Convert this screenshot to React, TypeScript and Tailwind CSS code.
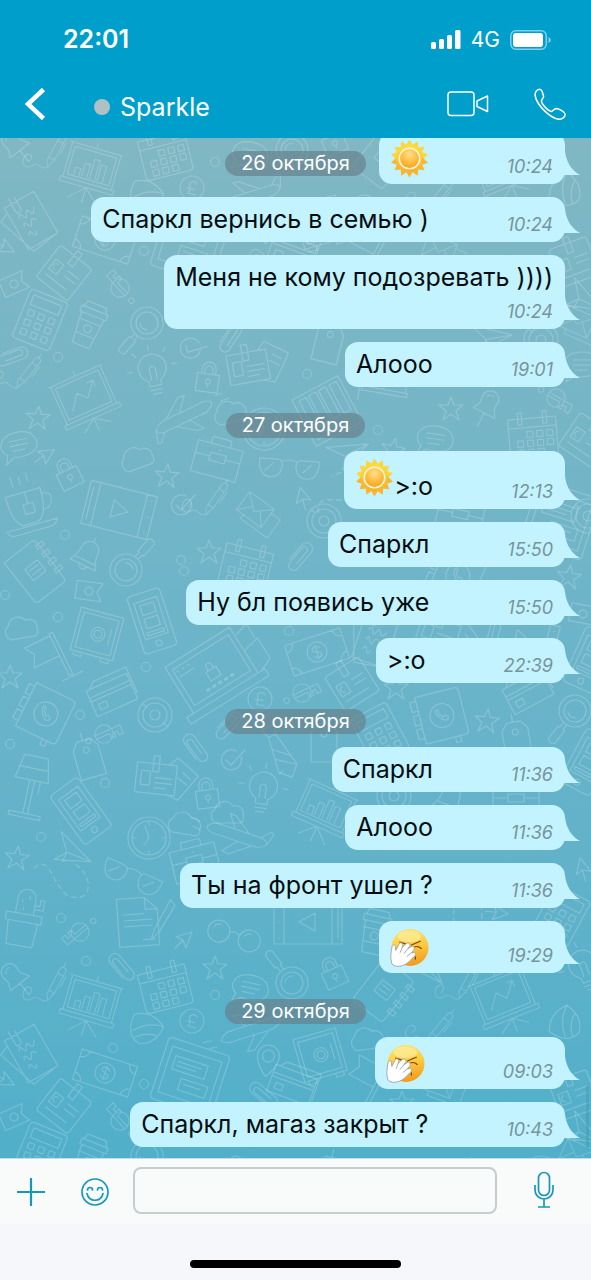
import type { ReactNode } from 'react';

/* ---------- Wallpaper doodles ---------- */

const doodles: Record<string, ReactNode> = {
  dot: <circle r="5" />,
  star: <path d="M0-12 3-4 12-4 5 2 8 11 0 5-8 11-5 2-12-4-3-4Z" />,
  arrow: <path d="M8-8-8-3-1 0 2 8ZM-1 0-9 8" />,
  pin: <path d="M-9-4A8 8 0 0 1 7-10L7 0 12 8H-12L-9 1ZM0 8V22M-5-8A5 5 0 0 1 1-11" />,
  pen: <path d="M2 12 0 22-5 15-5-20A4 4 0 0 1 3-20V12ZM-5 10H3M-5-14H3M6-16V0M-2-24V-30M0 22C-8 30-14 20-18 28S-30 36-32 26-20 14-24 26" />,
  chart: (
    <>
      <path d="M-30-20H30M-28-20V20M28-20V20M-31 20H31V25H-31ZM-24-16H24V16H-24ZM0-20V-26M0 25V42M0 25-16 40M0 25 16 40" />
      <path d="M-17 14V6H-11V14M-8 14V-1H-2V14M1 14V-8H7V14M10 14V-4H16V14" />
    </>
  ),
  trend: (
    <path d="M-32-24H32M-30-24V22M30-24V22M-33 22H33V27H-33ZM-26-20H26V18H-26ZM-18 10-6-6 3 4 16-12M9-12H16V-5M0-24V-30M0 27V42M0 27-16 38M0 27 16 38" />
  ),
  calendar: (
    <>
      <path d="M-24-18H24V18Q24 22 20 22H-20Q-24 22-24 18ZM-24-9H24M-14-24V-12H-10V-24ZM11-24V-12H15V-24Z" />
      <path d="M-6-5H0V1H-6ZM4-5H10V1H4ZM14-5H20V1H14ZM-16 4H-10V10H-16ZM-6 4H0V10H-6ZM4 4H10V10H4ZM14 4H20V10H14ZM-16 13H-10V19H-16ZM-6 13H0V19H-6ZM4 13H10V19H4Z" />
    </>
  ),
  coin: <path d="M12 0A12 12 0 1 1-12 0 12 12 0 0 1 12 0ZM4-5A4 4 0 0 0-3-4C-3 0 0 1-3 6H5M-5 1H3" />,
  check: <path d="M10-3A10 10 0 1 1 5-9M-5 0 0 5 14-10" />,
  shell: <path d="M-16-10Q0-20 16-8 14 12-2 16-18 12-16-10ZM-12 6Q0-8 16-8M-8 12Q2 2 13 3" />,
  plane: (
    <path d="M-34 6Q-30-3-16-3L26-7Q36-7 34-1 30 5 18 6L-16 9Q-30 12-34 6ZM-4-4-16-18H-9L12-6M4 7-8 24H0L20 6M26-7 34-17H38L35-2M-26-2-20-2M-48 12H-40M-54 4H-44" />
  ),
  papers: (
    <path d="M-18-24H16V24H-18ZM-18-18-28-14-14 28 14 24M-10-30V-16A3 3 0 0 0-4-16V-28M-10-8Q-8-14-6-8T-2-8 2-8 8-10M-10 2Q-8-4-6 2T-2 2 4 2M-10 12Q-8 6-6 12T-2 12" />
  ),
  money: (
    <path d="M-29-16H29V16H-29ZM-29-8A8 8 0 0 0-21-16M29-8A8 8 0 0 1 21-16M-29 8A8 8 0 0 1-21 16M29 8A8 8 0 0 0 21 16M10 0A10 10 0 1 1-10 0 10 10 0 0 1 10 0ZM4-3C2-7-4-6-4-3-4 1 4-1 4 3 4 6-2 7-4 3M0-7V7" />
  ),
  badge: (
    <path d="M-17-20H17Q20-20 20-17V17Q20 20 17 20H-17Q-20 20-20 17V-17Q-20-20-17-20ZM-3-26H3V-10H-3ZM-15-6H-5V6H-15ZM-10-3A3 3 0 1 0-10 3M2-4H15M2 2H15M-14 12H12" />
  ),
  cards: (
    <path d="M-22-14H18V16H-22ZM-6-22H0V-6H-6ZM-17-6H-8V8H-17ZM-3 0H14M-3 5H14M-3 10H8M10-14 18-22 40-6 22 20 10 16M24-8 32-2M20-2 29 4" />
  ),
  flag: <path d="M-13-9H13L8 0 13 9H-13ZM4 0A4 4 0 1 1-4 0 4 4 0 0 1 4 0Z" />,
  pole: <path d="M14-22H18V24H14ZM14-20H-14L-8-10-14 2H14M6 26H28" />,
  key: <path d="M-10-1A10 10 0 1 1-10 1ZM-22 0A3 3 0 1 0-16 0 3 3 0 0 0-22 0ZM-10-2H20V8H15V3H11V8H6V2H-10" />,
  tablet: (
    <path d="M-28-32H28Q32-32 32-28V28Q32 32 28 32H-28Q-32 32-32 28V-28Q-32-32-28-32ZM-26-24H26V24H-26ZM-20-16H14V-2H-20ZM-16-11H8M-16-7H4M-8 4H20V16H-8ZM-4 9H14" />
  ),
  video: (
    <path d="M-34-22H34V22H-34ZM-24-22V22M24-22V22M-7-9 9 0-7 9ZM29-16H30M29 0H30M29 16H30M-30-16V16" />
  ),
  place: <path d="M0 18Q-11 6-11-3A11 11 0 0 1 11-3Q11 6 0 18ZM6-3A6 6 0 1 1-6-3 6 6 0 0 1 6-3Z" />,
  calc: (
    <>
      <path d="M-16-26H16Q20-26 20-22V22Q20 26 16 26H-16Q-20 26-20 22V-22Q-20-26-16-26ZM-15-21H15V-11H-15Z" />
      <path d="M-14-6H-8V0H-14ZM-3-6H3V0H-3ZM8-6H14V0H8ZM-14 4H-8V10H-14ZM-3 4H3V10H-3ZM8 4H14V10H8ZM-14 14H-8V20H-14ZM-3 14H3V20H-3ZM8 14H14V20H8Z" />
    </>
  ),
  coffee: <path d="M-14-16H14V-10H-14ZM-10-22H10L12-16H-12ZM-12-10-9 22H9L12-10M-12-3H12M-10 11H10M4 4A4 4 0 1 1-4 4 4 4 0 0 1 4 4Z" />,
  lens: <path d="M16 0A16 16 0 1 1-16 0 16 16 0 0 1 16 0ZM11 0A11 11 0 1 1-11 0 11 11 0 0 1 11 0ZM-2 16V22H-4V38Q0 42 4 38V22H2V16M-5 5Q0 9 5 5" />,
  clip: <path d="M-5 10V-9A6 6 0 0 1 7-9V12A5 5 0 0 1-3 12V-7A3 3 0 0 1 3-7V9" />,
  bulb: (
    <path d="M-6 14V9Q-14 4-14-4A14 14 0 0 1 14-4Q14 4 6 9V14ZM-6 18H6M-4 22H4M-3 8V-4Q0-8 3-4V8M-20-4H-25M20-4H25M0-22V-27M-14-18-17-22M14-18 17-22" />
  ),
  lock: <path d="M-11-4H11V14H-11ZM-7-4V-9A7 7 0 0 1 7-9V-4M-4-4V-8A4 4 0 0 1 4-8V-4M0 9V6A2.500 2.500 0 1 1 1 6" />,
  cloud: <path d="M-12 8A8 8 0 0 1-13-6 10 10 0 0 1 5-9 8 8 0 0 1 15 1 5 5 0 0 1 12 8Z" />,
  clock: <path d="M21 0A21 21 0 1 1-21 0 21 21 0 0 1 21 0ZM17 0A17 17 0 1 1-17 0 17 17 0 0 1 17 0ZM-4-12 0 0-5 7M0-16V-13M16 0H13M0 16V13M-16 0H-13" />,
  tag: <path d="M-12-12-6-20H8L14-12V18H-12ZM4-10A3 3 0 1 1-2-10 3 3 0 0 1 4-10ZM0-20V-28" />,
  book: (
    <path d="M-26-26H26V26H-26ZM-20-22H-12V10H-20ZM-9-22H-1V10H-9ZM2-22H10V10H2ZM14-22H22V10H14ZM-22 16H22M-22 21H10" />
  ),
  chat: <path d="M-18-2Q-16-14 0-14T18-2 0 11Q-4 11-7 10L-16 16-13 7Q-18 4-18-2ZM-9-6H9M-9-1H9M-7 4H5" />,
  planeP: <path d="M-20-14 20 0-14 14-6 2ZM-6 2 20 0M-6 2-6 12 0 8" />,
  glasses: <path d="M-30-8H-12Q-6-8-7 0-9 10-18 10-30 10-30-8ZM12-8H30Q30 10 18 10 9 10 7 0 6-8 12-8ZM-8-6Q0-10 8-6M-24 4-16-4M14 4 22-4" />,
  rounds: <path d="M-5 0A11 11 0 1 1-27 0 11 11 0 0 1-5 0ZM27 0A11 11 0 1 1 5 0 11 11 0 0 1 27 0ZM-5-2Q0-6 5-2M-22-3A6 6 0 0 1-16-7M10-3A6 6 0 0 1 16-7" />,
  case: <path d="M-23-15H23V17H-23ZM-10-15V-20Q-10-22-8-22H8Q10-22 10-20V-15M-23-2H-8M8-2H23M-8-6H8V2H-8ZM0-10H1" />,
  mail: <path d="M-20-14H18V14H-20ZM-20-14-1 3 18-14M-20 14-6-1M18 14 5-2M18-8H32V20H-10V14" />,
  cup: <path d="M-18-16H18Q18 14 6 16H-8Q-18 12-18-16ZM18-10Q28-10 26-2 24 6 16 6M-26 18H26Q24 24 18 24H-18Q-24 24-26 18ZM2-16V-4M-3-4H7V6H-3ZM-8-34V-24M0-32V-24M8-34V-26" />,
  bell: <path d="M-14 12Q-9 4-9-4A9 9 0 0 1 9-4Q9 4 14 12ZM-4 12A4 4 0 0 0 4 12M0-13V-17M-11 7H11" />,
  notebook: (
    <path d="M-20-26H14Q18-26 18-22V22Q18 26 14 26H-16Q-20 26-20 22ZM-8-8H8V6H-8ZM-5-4H5M-5 1H5M15-20H23V-16H15ZM15-10H23V-6H15ZM15 0H23V4H15ZM15 10H23V14H15Z" />
  ),
  safe: (
    <path d="M-22-22H22V22H-22ZM-18-18H18V18H-18ZM8 0A7 7 0 1 1-6 0 7 7 0 0 1 8 0ZM5 0A4 4 0 1 1-3 0 4 4 0 0 1 5 0ZM13-8V8M-18 22V26H-10V22M10 22V26H18V22" />
  ),
  phone: <path d="M-13-30H13Q17-30 17-26V26Q17 30 13 30H-13Q-17 30-17 26V-26Q-17-30-13-30ZM-12-22H12V16H-12ZM-7-18H7V-8H-7ZM-7-4H7V6H-7ZM3 23A3 3 0 1 1-3 23 3 3 0 0 1 3 23ZM-9 10H9V13H-9Z" />,
  laptop: (
    <>
      <path d="M-38-28H38V26H-38ZM-33-22H33V20H-33ZM-46 26H46V34H-46ZM-30-18H-28M-24-18H-22M-18-18H-16M-30-12H-14M-6-2H6V8H-6ZM-3-2V-6A3 3 0 0 1 3-6V-2M38 0 56-4V20L42 26M40-18 54-22V-6" />
      <path d="M-14 14H-12M-7 14H-5M0 14H2M7 14H9M14 14H16" strokeWidth="3" />
    </>
  ),
  credit: <path d="M-22-14H22V14H-22ZM-22-6H22M-22-2H22M-16 3H-8V9H-16ZM-18-14-12-20H24V8" />,
  contacts: (
    <path d="M-20-24H20Q24-24 24-20V20Q24 24 20 24H-20ZM-26-20H-20V-10H-26ZM-26-6H-20V4H-26ZM-26 8H-20V18H-26ZM14 0A12 12 0 1 1-10 0 12 12 0 0 1 14 0ZM-3-6C-5-2 2 7 7 5L8 2 5 0 3 2-1-3 0-5-2-7ZM10 24V30H15V24" />
  ),
  disc: <path d="M17 0A17 17 0 1 1-17 0 17 17 0 0 1 17 0ZM12 0A12 12 0 1 1-12 0 12 12 0 0 1 12 0ZM5 0A5 5 0 1 1-5 0 5 5 0 0 1 5 0ZM-13-11-8-8M13 11 8 8" />,
  lamp: <path d="M-12-32H12L17-8H-17ZM-15-20H15M-2-8V26M3-8V26M-16 26H16V30H-16ZM9-8V4" />,
  tie: <path d="M-7-28H7L4-18H-4ZM-4-18-10 18 0 28 10 18 4-18M-6-6 8 8M-8 4 9 18" />,
  trail: <path d="M-28-20Q-18-30-10-14T6 8Q28 14 26-6 24-18 10-26" strokeDasharray="5 4" />,
  cactus: <path d="M-18-2H18V6H-18ZM-15 6-13 30H13L15 6M-9-2V-18A9 9 0 0 1 9-18V-2M9-8H18V-18H14V-12H9M-4-16V-14M3-20V-18M-2-8V-6" />,
  doc: <path d="M-20-24H8L20-12V24H-20ZM8-24V-12H20M-14-8H6M-14-2H14M-14 4H14M4 18H16M34-20 16 8 12 18 20 12 38-14Z" />,
  globe: <path d="M14-6A14 14 0 1 1-14-6 14 14 0 0 1 14-6ZM-18-2Q-12 14 6 14M0 14V20M-16 20H14" />,
};

type Placement = [kind: string, x: number, y: number, turn: number];

const tile: Placement[] = [
  ['pin', 15, 144, -38], ['pen', 56, 152, 28], ['chart', 92, 166, 16], ['calendar', 165, 154, -14],
  ['dot', 215, 162, 0], ['chat', 250, 156, 12], ['lens', 292, 150, 142], ['lock', 333, 140, -24],
  ['notebook', 384, 158, 38], ['pen', 468, 150, 28], ['trend', 503, 163, -22], ['shell', 566, 190, -60],
  ['shell', 146, 196, 20], ['coin', 192, 188, 12], ['plane', 250, 196, -12], ['papers', 32, 220, -30],
  ['dot', 113, 215, 0], ['money', 105, 240, 18], ['tablet', 190, 244, 18], ['place', 268, 226, 8],
  ['safe', 320, 222, -16], ['cloud', 368, 208, -8], ['pole', 362, 246, 28], ['dot', 144, 251, 0],
  ['arrow', 4, 247, 70], ['badge', 64, 273, 38], ['flag', 14, 284, -24], ['key', 120, 288, 228],
  ['calc', 40, 320, 22], ['coffee', 89, 325, 22], ['lens', 147, 323, 42], ['clip', 13, 355, 70],
  ['dot', 58, 357, 0], ['pen', 28, 374, 38], ['check', 190, 348, 30], ['clip', 230, 336, 34],
  ['trend', 84, 396, -24], ['bulb', 153, 372, -12], ['lock', 208, 378, 8], ['cards', 250, 366, -10],
  ['star', 38, 418, 4], ['plane', 185, 418, 160], ['cloud', 231, 414, -16], ['clock', 264, 429, 0],
  ['tag', 327, 344, 14], ['dot', 307, 374, 0], ['book', 327, 411, -28], ['dot', 378, 430, 0],
  ['star', 451, 409, 0], ['pin', 488, 406, 28], ['key', 556, 398, 30], ['chat', 435, 440, 8],
  ['calendar', 533, 436, -5], ['planeP', 350, 452, -24], ['star', 393, 450, 12], ['mail', 578, 322, 24],
  ['planeP', 492, 337, -6], ['pen', 418, 372, 60], ['disc', 541, 340, 0], ['chat', 582, 366, 0],
  ['pole', 388, 376, 100], ['badge', 586, 440, 34], ['chat', 19, 446, -12], ['arrow', 45, 456, 10],
  ['lock', 68, 474, -26], ['cloud', 138, 460, -20], ['star', 167, 476, 4], ['case', 217, 460, 15],
  ['glasses', 289, 468, 4], ['cup', 27, 508, -16], ['video', 119, 510, 14], ['check', 181, 505, 0],
  ['pen', 216, 500, 34], ['mail', 256, 510, 36], ['arrow', 303, 498, -60], ['disc', 324, 521, 0],
  ['trail', 350, 498, -60], ['dot', 65, 535, 0], ['bell', 88, 554, 26], ['lens', 126, 570, 222],
  ['notebook', 36, 571, -38], ['flag', 89, 591, 8], ['star', 209, 552, 0], ['calendar', 246, 566, 14],
  ['dot', 181, 560, 0], ['dot', 184, 571, 0], ['clip', 300, 555, 40], ['case', 460, 516, 12],
  ['tablet', 560, 520, 18], ['star', 569, 577, 8], ['contacts', 456, 575, 24], ['disc', 588, 516, 0],
  ['dot', 5, 595, 0], ['dot', 58, 617, 0], ['cloud', 22, 630, -10], ['safe', 97, 634, 15],
  ['phone', 152, 621, -18], ['flag', 583, 614, 10], ['pole', 46, 660, -26], ['star', 10, 677, 0],
  ['laptop', 212, 671, -32], ['dot', 146, 667, 0], ['dot', 289, 631, 0], ['money', 317, 652, -18],
  ['papers', 376, 640, 18], ['cards', 440, 634, 18], ['video', 522, 640, 14], ['phone', 590, 660, 24],
  ['credit', 112, 695, -24], ['contacts', 44, 713, 26], ['dot', 80, 715, 0], ['disc', 155, 715, 0],
  ['coin', 260, 699, 8], ['key', 302, 693, -26], ['badge', 352, 684, -32], ['star', 396, 688, 0],
  ['calc', 380, 734, -28], ['contacts', 440, 716, -14], ['star', 487, 721, 6], ['credit', 528, 692, -28],
  ['tag', 516, 742, -10], ['lens', 575, 711, 38], ['phone', 588, 762, 28], ['tag', 323, 744, 0],
  ['lamp', 30, 788, 12], ['key', 104, 734, -24], ['tag', 88, 760, -16],
  ['clip', 194, 748, -36], ['check', 231, 760, 0], ['tie', 280, 752, -26], ['clip', 228, 724, 44],
  ['dot', 10, 744, 0], ['dot', 105, 783, 0], ['phone', 81, 811, -36], ['cards', 158, 778, 6],
  ['lock', 207, 794, -8], ['bulb', 263, 790, 8], ['chart', 326, 806, 24], ['disc', 394, 796, 0],
  ['bell', 450, 798, 20], ['case', 516, 800, 0], ['dot', 41, 837, 0], ['clock', 149, 838, 0],
  ['cloud', 185, 826, 10], ['plane', 237, 834, 24], ['case', 195, 862, -14], ['cloud', 228, 815, 0],
  ['star', 17, 858, 6], ['planeP', 73, 853, 26], ['trail', 62, 888, 0], ['glasses', 132, 877, 24],
  ['cactus', 24, 916, 10], ['dot', 61, 918, 0], ['key', 80, 932, 140], ['doc', 138, 922, -4],
  ['arrow', 184, 940, 0], ['rounds', 234, 936, 18], ['video', 308, 922, 180], ['coffee', 375, 932, 12],
  ['trail', 455, 914, 40], ['arrow', 497, 913, 50], ['calc', 561, 916, 28], ['arrow', 583, 869, -60],
  ['clip', 120, 967, -40], ['dot', 86, 961, 0], ['star', 215, 968, 0], ['bulb', 584, 968, -20],
  ['planeP', 429, 968, 50], ['star', 402, 270, 0], ['mail', 440, 250, 20], ['badge', 574, 262, -20],
  ['planeP', 585, 300, 30], ['clip', 262, 262, -50], ['credit', 292, 252, 20], ['pen', 440, 196, 40],
];

function scaleOf(kind: string) {
  if (kind === 'pen') return 0.8;
  if (kind === 'mail') return 0.8;
  if (kind === 'dot' || kind === 'chart' || kind === 'trend' || kind === 'key' || kind === 'plane') return 0.9;
  return 1;
}

function Wallpaper() {
  return (
    <svg className="absolute inset-0 h-full w-full" aria-hidden="true">
      <g id="doodle-tile" fill="none" stroke="#ffffff" strokeOpacity="0.2" strokeWidth="1.2" strokeLinejoin="round" strokeLinecap="round">
        {tile.map(([kind, x, y, turn], i) => (
          <g key={i} transform={`translate(${x} ${y - 138}) rotate(${turn}) scale(${scaleOf(kind)})`}>
            {doodles[kind]}
          </g>
        ))}
      </g>
      <use href="#doodle-tile" y="833" />
    </svg>
  );
}

/* ---------- Emoji ---------- */

const rays = Array.from({ length: 14 }, (_, i) => (i * 360) / 14);

function Sun() {
  return (
    <svg viewBox="-20 -20 40 40" className="h-[39px] w-[39px]" role="img" aria-label="солнце">
      <defs>
        <radialGradient id="sun-core" cx="0.5" cy="0.3" r="0.75">
          <stop offset="0" stopColor="#ffe08a" />
          <stop offset="0.55" stopColor="#fdbb3c" />
          <stop offset="1" stopColor="#f29a1c" />
        </radialGradient>
        <linearGradient id="sun-rays" x1="0" y1="0" x2="0" y2="1">
          <stop offset="0" stopColor="#ffdf3e" />
          <stop offset="1" stopColor="#f6b02c" />
        </linearGradient>
      </defs>
      {rays.map((turn) => (
        <path key={turn} d="M-4.500-12 0-19.500 4.500-12Z" fill={turn > 90 && turn < 270 ? '#f7b733' : '#fcd63a'} transform={`rotate(${turn})`} />
      ))}
      <circle r="13.500" fill="url(#sun-rays)" />
      <circle r="10.500" fill="url(#sun-core)" stroke="#fff6dc" strokeWidth="1.600" />
    </svg>
  );
}

function Facepalm() {
  return (
    <svg viewBox="0 0 40 40" className="h-[39px] w-[39px]" role="img" aria-label="рука на лице">
      <defs>
        <linearGradient id="face" x1="0.4" y1="0" x2="0.6" y2="1">
          <stop offset="0" stopColor="#ffe36a" />
          <stop offset="0.5" stopColor="#fdc93c" />
          <stop offset="1" stopColor="#f2981f" />
        </linearGradient>
      </defs>
      <circle cx="20.500" cy="20" r="19" fill="url(#face)" />
      <ellipse cx="20" cy="8.500" rx="12" ry="6" fill="#fff2a8" opacity="0.6" />
      <path d="M10 14.500 18 17M31 13.500 22 17.500M25 19.500Q29 18 32 21M26 29.500V32" fill="none" stroke="#7a4310" strokeWidth="1.200" strokeLinecap="round" />
      <path
        d="M2 37C0 31 1 25 2 20 2 17 5 16 5.500 19L6 23 9 17C10 14 13.500 15 13 18L12.500 20 16.500 16C19 14 21.500 16.500 20 19L18.500 21 22 19C24.500 18 26 20.500 24 23L22 25.500 24.500 25C27 25.500 26.500 28 24.500 29.500 21 33 18 37 13 38.500 9 40 4 39.500 2 37Z"
        fill="#ffffff" stroke="#9ba0aa" strokeWidth="0.900" strokeLinejoin="round"
      />
      <path d="M12.500 20 10.500 25M18.500 21 14.500 26M22 25.500 17.500 29" fill="none" stroke="#9ba0aa" strokeWidth="0.900" strokeLinecap="round" />
    </svg>
  );
}

/* ---------- Conversation ---------- */

function DatePill({ children }: { children: ReactNode }) {
  return (
    <span className="block h-[25px] rounded-full bg-[#66818d]/70 px-4 text-[20px] leading-[25px] text-white">
      {children}
    </span>
  );
}

function DateRow({ children }: { children: ReactNode }) {
  return (
    <li className="mt-[13px] flex justify-center self-stretch">
      <DatePill>{children}</DatePill>
    </li>
  );
}

type BubbleProps = { time: string; text?: string; emoji?: 'sun' | 'palm'; stacked?: boolean };

function Bubble({ time, text, emoji, stacked }: BubbleProps) {
  return (
    <li
      className={`relative mr-[26px] flex max-w-[85%] shrink-0 rounded-[13px] bg-[#c3f3ff] pr-3 pl-[11px] ${
        stacked ? 'flex-col gap-[2px]' : 'items-end gap-[78px]'
      } ${emoji ? (text ? 'h-[58px]' : 'h-[52px]') : ''}`}
    >
      <div className={`flex ${emoji && text ? 'items-end' : 'items-center'}`}>
        {emoji && (
          <span className={text ? 'pb-[12px]' : 'pb-[6px]'}>{emoji === 'sun' ? <Sun /> : <Facepalm />}</span>
        )}
        {text && <p className="text-[25px] leading-[45px] text-[#050d10]">{text}</p>}
      </div>
      <time className="self-end pb-[7px] text-[18px] leading-5 text-[#78949d] italic">{time}</time>
      <svg viewBox="0 0 17 24" className="absolute bottom-[9px] left-full -ml-[2px] h-6 w-[17px]" aria-hidden="true">
        <path d="M0 0H2C3 11 9 20 17 24H0Z" fill="#c3f3ff" />
      </svg>
    </li>
  );
}

function Header() {
  return (
    <header className="shrink-0 bg-[#009fcb] pb-[10px] text-white">
      <div className="flex h-20 items-center justify-between pr-[39px] pl-[63px]">
        <span className="text-[25px] font-semibold">22:01</span>
        <div className="flex items-center gap-[10px]">
          <svg viewBox="0 0 30 20" className="h-5 w-[30px]" fill="#ffffff" aria-hidden="true">
            <rect x="0" y="12" width="5" height="7" rx="1.500" />
            <rect x="8" y="9" width="5" height="10" rx="1.500" />
            <rect x="16" y="5" width="5" height="14" rx="1.500" />
            <rect x="24" y="0" width="5.500" height="19" rx="1.500" />
          </svg>
          <span className="text-[21px]">4G</span>
          <svg viewBox="0 0 42 20" className="h-5 w-[42px]" aria-hidden="true">
            <rect x="0.800" y="0.800" width="35.500" height="18.400" rx="5" fill="none" stroke="#7fd0e8" strokeWidth="1.500" />
            <rect x="3" y="3" width="30" height="14" rx="3" fill="#ffffff" />
            <path d="M38.500 7Q41 8 41 10T38.500 13Z" fill="#7fd0e8" />
          </svg>
        </div>
      </div>
      <div className="flex h-12 items-center pr-[25px] pl-6">
        <button aria-label="Назад" className="block">
          <svg viewBox="0 0 22 34" className="h-[34px] w-[22px]" fill="none" stroke="#ffffff" strokeWidth="4.500" aria-hidden="true">
            <path d="M19.500 2.500 4 17 19.500 31.500" />
          </svg>
        </button>
        <span className="mt-[6px] ml-[48px] h-4 w-4 rounded-full bg-[#b0c1c5]" />
        <h1 className="ml-[10px] flex-1 pt-[6px] text-[25px] leading-8">Sparkle</h1>
        <button aria-label="Видеозвонок" className="mr-[45px] block">
          <svg viewBox="0 0 42 26" className="h-[26px] w-[42px]" fill="none" stroke="#ffffff" strokeWidth="1.500" strokeLinejoin="round" aria-hidden="true">
            <rect x="1" y="1" width="26" height="23.500" rx="3" />
            <path d="M30 10 40.500 5V20.500L30 15.500Z" />
          </svg>
        </button>
        <button aria-label="Позвонить" className="block">
          <svg viewBox="0 0 32 32" className="h-8 w-8" fill="none" stroke="#ffffff" strokeWidth="1.500" strokeLinejoin="round" aria-hidden="true">
            <path d="M2 3.500C4 0.500 7 0.500 8.200 3.500L9.500 8C10 9.800 8 11 7.500 12.500 7 15 13 22.500 17 23.500 19 24 19.500 20.500 22.500 20.500 25.500 21 31.500 24.500 31.200 26.500 31 29 28 31.300 25.500 31.300 17 31 3 17.500 1.200 8 0.900 6 1.200 4.700 2 3.500Z" />
          </svg>
        </button>
      </div>
    </header>
  );
}

function Composer() {
  return (
    <footer className="shrink-0 bg-[#f6f7fa]">
      <form className="flex h-[66px] items-center border-t border-[#c4dde4] bg-[#f9fafa] pr-[35px] pb-[3px] pl-4 text-[#1798b8]">
        <button type="button" aria-label="Добавить" className="mt-1 block">
          <svg viewBox="0 0 30 30" className="h-[30px] w-[30px]" fill="none" stroke="currentColor" strokeWidth="2.200" aria-hidden="true">
            <path d="M15 1V29M1 15H29" />
          </svg>
        </button>
        <button type="button" aria-label="Смайлы" className="mt-1 ml-[35px] block">
          <svg viewBox="0 0 28 28" className="h-7 w-7" fill="none" stroke="currentColor" strokeWidth="1.700" strokeLinecap="round" aria-hidden="true">
            <circle cx="14" cy="14" r="13" />
            <path d="M6.500 12A2.500 2.500 0 0 1 11.500 12M16.500 12A2.500 2.500 0 0 1 21.500 12M6 15.500C8 24.500 20 24.500 22 15.500" />
          </svg>
        </button>
        <input
          aria-label="Сообщение"
          className="ml-[24px] h-[47px] min-w-0 flex-1 rounded-lg border-2 border-[#c5cdd0] bg-transparent px-3 text-[24px] text-[#050d10] outline-none"
        />
        <button type="button" aria-label="Голосовое сообщение" className="ml-[35px] block">
          <svg viewBox="0 0 24 38" className="h-[38px] w-6" fill="none" stroke="currentColor" strokeWidth="1.700" aria-hidden="true">
            <rect x="6.500" y="1.500" width="11" height="23" rx="5.500" />
            <path d="M3 14V19A9 9 0 0 0 21 19V14M12 28V36M6 36H18" />
          </svg>
        </button>
      </form>
      <div className="flex h-14 items-end justify-center pb-3">
        <span className="h-2 w-[211px] rounded-full bg-black" />
      </div>
    </footer>
  );
}

export default function App() {
  return (
    <div className="flex h-screen flex-col font-['Inter','Noto_Sans',sans-serif]">
      <Header />
      <main className="relative flex min-h-0 flex-1 flex-col overflow-hidden bg-linear-to-b from-[#80b7c3] via-[#6cb4c9] to-[#51afca]">
        <Wallpaper />
        <div className="absolute inset-x-0 top-[13px] flex justify-center">
          <DatePill>26 октября</DatePill>
        </div>
        <ul className="relative flex min-h-0 flex-1 flex-col items-end justify-end gap-[13px] pb-[11px]">
          <Bubble emoji="sun" time="10:24" />
          <Bubble text="Спаркл вернись в семью )" time="10:24" />
          <Bubble text="Меня не кому подозревать ))))" time="10:24" stacked />
          <Bubble text="Алооо" time="19:01" />
          <DateRow>27 октября</DateRow>
          <Bubble emoji="sun" text=">:o" time="12:13" />
          <Bubble text="Спаркл" time="15:50" />
          <Bubble text="Ну бл появись уже" time="15:50" />
          <Bubble text=">:o" time="22:39" />
          <DateRow>28 октября</DateRow>
          <Bubble text="Спаркл" time="11:36" />
          <Bubble text="Алооо" time="11:36" />
          <Bubble text="Ты на фронт ушел ?" time="11:36" />
          <Bubble emoji="palm" time="19:29" />
          <DateRow>29 октября</DateRow>
          <Bubble emoji="palm" time="09:03" />
          <Bubble text="Спаркл, магаз закрыт ?" time="10:43" />
        </ul>
        <span className="absolute right-[2px] bottom-[10px] h-[62px] w-[3px] rounded-full bg-[#4d8fa3]/40" />
      </main>
      <Composer />
    </div>
  );
}
